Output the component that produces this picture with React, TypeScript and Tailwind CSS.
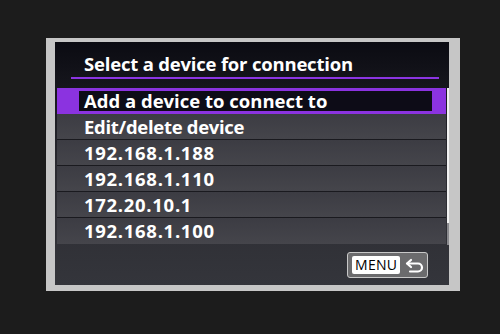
import React from "react";

const rows = ["Edit/delete device", "192.168.1.188", "192.168.1.110", "172.20.10.1", "192.168.1.100"];

export default function App() {
  return (
    <div className="w-[500px] h-[334px] bg-[#1c1c1c] pt-[38px] pl-[46px]" style={{ fontFamily: '"Open Sans", "Liberation Sans", sans-serif' }}>
      {/* camera body frame */}
      <div className="w-[414px] h-[253px] bg-[#c6c6c6] pt-[4px] pl-[9px]">
        <div className="w-[394px] h-[243px] bg-gradient-to-b from-[#0b0b12] via-[#2a2a30] to-[#34353b] flex flex-col">
          {/* Title */}
          <div className="h-[46px] pl-[16px] pr-[10px] pt-[11px]">
            <div className="pl-[13px] text-[18.5px] leading-[21px] font-bold text-white tracking-[-0.2px]">
              Select a device for connection
            </div>
            <div className="mt-[3px] h-[2px] bg-[#8b35e2]" />
          </div>

          {/* List */}
          <div className="flex">
            <div className="w-[389px] ml-[2px] flex flex-col">
              <div className="h-[26px] bg-[#8b33e0] pl-[22px] pr-[14px] py-[3px]">
                <div className="h-[20px] bg-[#0d0c17] pl-[5px] text-[18.5px] leading-[20px] font-bold text-white">
                  Add a device to connect to
                </div>
              </div>
              {rows.map((r, i) => (
                <div
                  key={r}
                  className={`h-[26px] pl-[27px] text-[18.5px] leading-[26px] font-bold text-white bg-gradient-to-b from-[#3c3c43] to-[#45454b] ${i === 0 ? "tracking-[-0.3px]" : "tracking-[0.7px]"} ${i < rows.length - 1 ? "border-b border-[#1a1a1f]" : ""}`}
                >
                  {r}
                </div>
              ))}
            </div>
            {/* scrollbar */}
            <div className="ml-[1px] w-[2px] flex flex-col">
              <div className="h-[135px] bg-[#f2f2f2]" />
              <div className="h-[22px] bg-[#8a8a8e]" />
            </div>
          </div>

          {/* Footer */}
          <div className="flex-1 flex items-start justify-end pr-[21px] pt-[7px]">
            <div className="w-[81px] h-[26px] rounded-[3px] border border-[#c8c8c8] bg-[#6b6b6d] flex items-center pl-[4px] gap-[4px]">
              <div className="h-[18px] px-[3px] bg-white rounded-[2px] text-[14px] leading-[18px] font-medium text-black tracking-[0.3px]">
                MENU
              </div>
              <svg width="22" height="16" viewBox="0 0 22 16" fill="none">
                <path d="M7 3 L3 6.5 L7 10" stroke="white" strokeWidth="2.2" strokeLinejoin="round" strokeLinecap="round" />
                <path d="M3.5 6.5 H14 a4 4 0 0 1 0 8 H6" stroke="white" strokeWidth="2.2" strokeLinecap="round" />
              </svg>
            </div>
          </div>
        </div>
      </div>
    </div>
  );
}
